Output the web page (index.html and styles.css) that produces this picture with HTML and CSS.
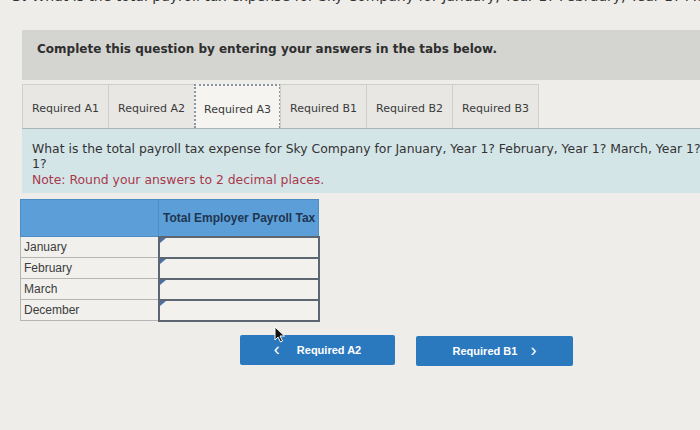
FILE: index.html
```html
<!DOCTYPE html>
<html lang="en">
<head>
    <meta charset="UTF-8">
    <title>Payroll Tax Question</title>
    <link rel="stylesheet" href="styles.css">
</head>
<body>
    <p class="question-title"><b>3.</b> What is the total payroll tax expense for Sky Company for January, Year 1? February, Year 1? March, Year 1? December, Year 1?</p>

    <div class="container">
        <div class="instructions">Complete this question by entering your answers in the tabs below.</div>

        <div class="tabs">
            <div class="tab">Required A1</div>
            <div class="tab">Required A2</div>
            <div class="tab active">Required A3</div>
            <div class="tab">Required B1</div>
            <div class="tab">Required B2</div>
            <div class="tab">Required B3</div>
        </div>

        <div class="panel">
            <p>What is the total payroll tax expense for Sky Company for January, Year 1? February, Year 1? March, Year 1? December, Year 1?</p>
            <p class="note">Note: Round your answers to 2 decimal places.</p>
        </div>

        <table class="answers">
            <thead>
                <tr>
                    <th></th>
                    <th>Total Employer Payroll Tax</th>
                </tr>
            </thead>
            <tbody>
                <tr><td class="label">January</td><td class="input"><span class="marker"></span></td></tr>
                <tr><td class="label">February</td><td class="input"><span class="marker"></span></td></tr>
                <tr><td class="label">March</td><td class="input"><span class="marker"></span></td></tr>
                <tr><td class="label">December</td><td class="input"><span class="marker"></span></td></tr>
            </tbody>
        </table>

        <div class="nav">
            <button class="btn btn-prev"><span class="chev">&lsaquo;</span> Required A2</button>
            <button class="btn btn-next">Required B1 <span class="chev">&rsaquo;</span></button>
        </div>
    </div>

    <!-- mouse pointer resting over the A2 button -->
    <svg class="cursor" width="12" height="17" viewBox="0 0 12 17">
        <path d="M1 1 L1 14 L4 11 L6.5 16 L8.5 15 L6 10 L10.5 10 Z" fill="#111" stroke="#fff" stroke-width="1"/>
    </svg>
</body>
</html>
```

FILE: styles.css
```css
* {
    margin: 0;
    padding: 0;
    box-sizing: border-box;
}

body {
    font-family: 'DejaVu Sans', Verdana, sans-serif;
    background: #eeede9;
    color: #333;
    overflow: hidden;
    width: 700px;
    height: 430px;
    position: relative;
}

.question-title {
    font-size: 14px;
    line-height: 18px;
    margin-top: -13px;
    padding-left: 12px;
    white-space: nowrap;
    color: #333;
}

.container {
    width: 860px;
    padding-left: 22px;
}

.instructions {
    margin-top: 25px;
    height: 50px;
    background: #d4d4d1;
    padding: 12px 0 0 15px;
    font-size: 12px;
    font-weight: bold;
    color: #2e2e2e;
}

.tabs {
    display: flex;
    margin-top: 4px;
    height: 44px;
}

.tab {
    width: 87px;
    height: 44px;
    background: #e8e7e3;
    border: 1px solid #cfcfcc;
    border-bottom: none;
    font-size: 11px;
    color: #3a3a3a;
    padding-top: 17px;
    text-align: center;
}

.tab + .tab {
    margin-left: -1px;
}

.tab.active {
    background: #f5f4f0;
    border: 2px dotted #8b95a0;
    border-bottom: none;
}

.panel {
    background: #d4e5e8;
    border-top: 1px solid #aab5b8;
    height: 65px;
    padding: 12px 10px 0 10px;
    font-size: 12.4px;
    line-height: 15px;
    color: #333;
}

.panel p {
    width: 775px;
}

.panel .note {
    color: #a8394a;
    margin-top: 1px;
}

.answers {
    margin: 6px 0 0 -2px;
    border-collapse: collapse;
    font-family: 'Liberation Sans', Arial, sans-serif;
    font-size: 12px;
}

.answers th {
    background: #5c9fd8;
    height: 37px;
    border: 1px solid #4d8dc4;
    color: #1f3550;
    font-weight: bold;
    text-align: left;
    white-space: nowrap;
    padding: 0 2px 0 4px;
}

.answers th:first-child {
    width: 138px;
}

.answers td {
    height: 21px;
}

.answers td.label {
    background: #f1f0ed;
    border: 1px solid #b5b5b3;
    padding-left: 3px;
    color: #3c3c3c;
}

.answers td.input {
    background: #f2f1ee;
    border: 2px solid #5c6670;
    width: 160px;
    position: relative;
}

.marker {
    position: absolute;
    top: 0;
    left: 0;
    border-left: 6px solid #4a6fa0;
    border-bottom: 5px solid transparent;
}

.nav {
    display: flex;
    gap: 21px;
    padding-left: 218px;
    margin-top: 13px;
}

.btn {
    width: 155px;
    height: 30px;
    background: #2a79bf;
    color: #fff;
    border: none;
    border-radius: 2px;
    font-family: 'Liberation Sans', Arial, sans-serif;
    font-size: 11px;
    font-weight: bold;
}

.btn-next {
    width: 157px;
    margin-top: 1px;
}

.chev {
    font-size: 18px;
    font-weight: normal;
    vertical-align: -1px;
}

.btn-prev .chev {
    margin-right: 14px;
}

.btn-next .chev {
    margin-left: 10px;
}

.cursor {
    position: absolute;
    left: 274px;
    top: 326px;
}
```
